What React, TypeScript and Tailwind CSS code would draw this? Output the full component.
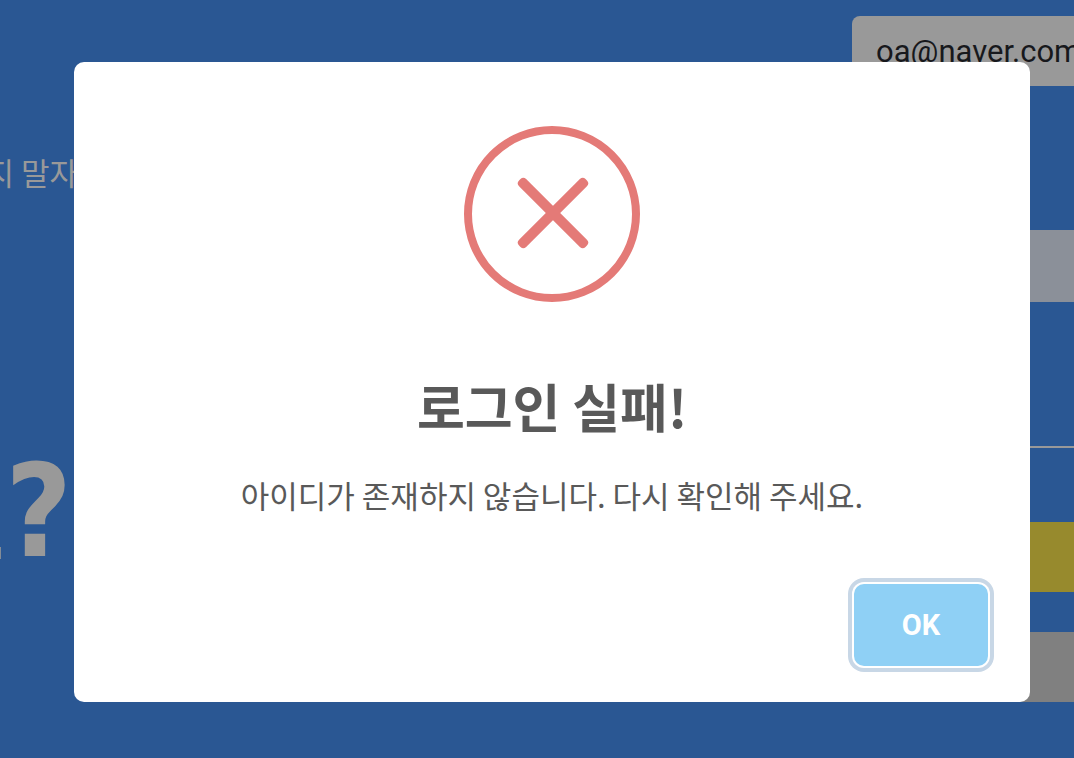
function LoginPage() {
  return (
    <div className="flex min-h-screen justify-between overflow-hidden bg-[#2a5793]">
      <section className="flex w-20 flex-col items-end pt-[148px] whitespace-nowrap text-[#999999]">
        <p className="pr-0.5 text-[31px] leading-[48px]">지 말자</p>
        <h1 className="flex items-center pt-[236px] text-right text-[128px] leading-[160px] font-bold">
          <span className="text-[112px]">요</span>
          <span className="pr-2 font-['DejaVu_Sans_Condensed','DejaVu_Sans',sans-serif] font-stretch-condensed">?</span>
        </h1>
      </section>
      <form className="flex w-[222px] flex-col pt-4">
        <input
          type="email"
          aria-label="이메일"
          defaultValue="oa@naver.com"
          className="h-[70px] w-full rounded-l-lg bg-[#999999] pl-6 font-['Roboto',sans-serif] text-[31px] text-[#17181c] outline-none"
        />
        <input
          type="password"
          aria-label="비밀번호"
          className="mt-36 h-[72px] w-full rounded-l-lg bg-[#8b9099] outline-none"
        />
        <hr className="mt-36 border-t-2 border-[#999999]" />
        <button type="button" aria-label="카카오 로그인" className="mt-[74px] h-[70px] w-full rounded-l-lg bg-[#978a2d]" />
        <button type="button" aria-label="로그인" className="mt-10 h-[70px] w-full rounded-l-lg bg-[#808080]" />
      </form>
    </div>
  );
}

function ErrorIcon() {
  return (
    <svg viewBox="0 0 176 176" className="size-44" fill="none" stroke="#e47a77" aria-hidden="true">
      <circle cx="88" cy="88" r="84" strokeWidth="8" />
      <g fill="#e47a77" stroke="none">
        <rect x="42" y="82" width="94" height="10" rx="4" transform="rotate(45 89 87)" />
        <rect x="42" y="82" width="94" height="10" rx="4" transform="rotate(-45 89 87)" />
      </g>
    </svg>
  );
}

function LoginFailedDialog() {
  return (
    <div className="fixed inset-0 pt-[62px] pr-11 pl-[74px]">
      <div
        role="alertdialog"
        aria-labelledby="dialog-title"
        aria-describedby="dialog-text"
        className="flex flex-col items-center rounded-[10px] bg-white pt-16 pb-9"
      >
        <ErrorIcon />
        <h2 id="dialog-title" className="mt-[66px] text-[52px] leading-[76px] font-bold text-[#595959]">
          로그인 실패!
        </h2>
        <p id="dialog-text" className="mt-[26px] text-[31px] leading-[50px] text-[#595959]">
          아이디가 존재하지 않습니다. 다시 확인해 주세요.
        </p>
        <button
          type="button"
          className="mt-16 mr-[42px] h-[82px] w-[134px] self-end rounded-[10px] bg-[#8fd0f5] pt-0.5 font-['Roboto',sans-serif] text-[29px] font-bold text-white ring-4 ring-[#c8d7e6] ring-offset-2 outline-none"
        >
          OK
        </button>
      </div>
    </div>
  );
}

export default function App() {
  return (
    <main className="font-['Noto_Sans_CJK_KR',sans-serif]">
      <LoginPage />
      <LoginFailedDialog />
    </main>
  );
}
